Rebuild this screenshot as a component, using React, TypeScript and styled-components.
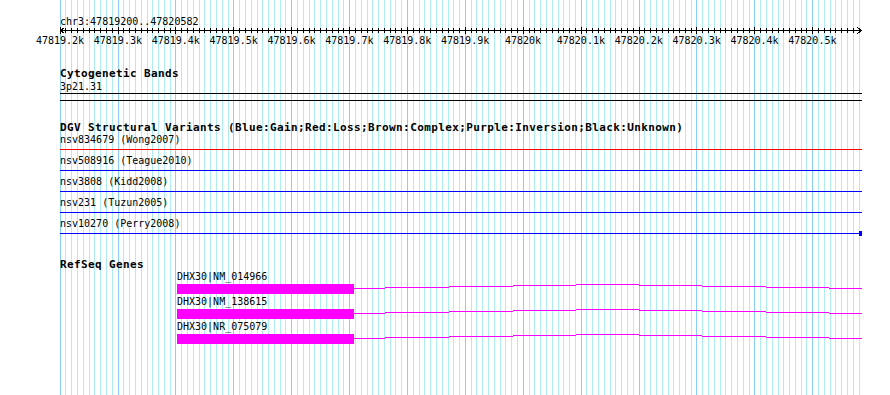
import React from "react";
import styled, { createGlobalStyle } from "styled-components";

const LEFT = 60;
const STEP10 = 5.78871; // px per 10 bp
const TRACK_W = 802;

const gridX = (i: number) => Math.round(LEFT - 0.3 + i * STEP10);
const GRID = Array.from({ length: 139 }, (_, i) => ({ x: gridX(i), major: i % 10 === 0 }));

const RULER_LABELS = [
  "47819.2k", "47819.3k", "47819.4k", "47819.5k", "47819.6k", "47819.7k", "47819.8k",
  "47819.9k", "47820k", "47820.1k", "47820.2k", "47820.3k", "47820.4k", "47820.5k",
];

const VARIANTS = [
  { name: "nsv834679 (Wong2007)", color: "#ff0000", endBox: false },
  { name: "nsv508916 (Teague2010)", color: "#0000ff", endBox: false },
  { name: "nsv3808 (Kidd2008)", color: "#0000ff", endBox: false },
  { name: "nsv231 (Tuzun2005)", color: "#0000ff", endBox: false },
  { name: "nsv10270 (Perry2008)", color: "#0000ff", endBox: true },
];

const GENES = ["DHX30|NM_014966", "DHX30|NM_138615", "DHX30|NR_075079"];

// intron "hat" connector, absolute x ranges with level above baseline
const HAT: [number, number, number][] = [
  [354, 385, 4], [385, 449, 3], [449, 513, 2], [513, 576, 1], [576, 639, 0],
  [639, 702, 1], [702, 766, 2], [766, 829, 3], [829, 862, 4],
];

const GlobalStyle = createGlobalStyle`
  html, body { margin: 0; padding: 0; background: #ffffff; }
`;

const Canvas = styled.div`
  position: relative;
  width: 890px;
  height: 395px;
  overflow: hidden;
  background: #ffffff;
`;

const GridLayer = styled.svg`
  position: absolute;
  top: 0;
  left: 0;
  display: block;
`;

const Panel = styled.div`
  position: relative;
  width: ${TRACK_W}px;
  margin-left: ${LEFT}px;
  padding-top: 15px;
  display: flex;
  flex-direction: column;
  font-family: "DejaVu Sans Mono", "Liberation Mono", monospace;
  font-size: 10px;
  line-height: 13px;
  color: #000000;
`;

const RegionTitle = styled.div`
  height: 11px;
  white-space: nowrap;
`;

const Glyph = styled.svg<{ $h: number }>`
  display: block;
  width: ${TRACK_W}px;
  height: ${(p) => p.$h}px;
  overflow: visible;
  shape-rendering: crispEdges;
`;

const TickLabels = styled.div`
  display: flex;
  height: 13px;
  margin-left: -${STEP10 * 5}px;
  white-space: nowrap;
`;

const TickLabel = styled.div`
  flex: 0 0 ${STEP10 * 10}px;
  text-align: center;
`;

const Track = styled.section`
  display: flex;
  flex-direction: column;
  margin-top: 20px;
`;

const TrackTitle = styled.div<{ $h?: number }>`
  height: ${(p) => p.$h ?? 13}px;
  font-size: 11px;
  font-weight: bold;
  letter-spacing: 0.38px;
  line-height: 13px;
  white-space: nowrap;
`;

const FeatureLabel = styled.div<{ $indent?: number; $lift?: number }>`
  position: relative;
  z-index: 1;
  height: 13px;
  line-height: ${(p) => 13 - 2 * (p.$lift ?? 0)}px;
  padding-left: ${(p) => p.$indent ?? 0}px;
  white-space: nowrap;
`;

const Band = styled.div`
  height: 6px;
  border-top: 1px solid #000000;
  border-bottom: 1px solid #000000;
`;

const Ruler: React.FC = () => (
  <Glyph $h={8} viewBox={`0 0 ${TRACK_W} 8`}>
    <rect x={0} y={4} width={801} height={1} fill="#000" />
    {GRID.map((g) => (
      <rect
        key={g.x}
        x={g.x - LEFT}
        y={g.major ? 1 : 2}
        width={1}
        height={g.major ? 7 : 5}
        fill="#000"
      />
    ))}
    <polyline points="4.5,1.5 0.5,4.5 4.5,7.5" fill="none" stroke="#000" strokeWidth={1} />
    <polyline points="797.5,1.5 801.5,4.5 797.5,7.5" fill="none" stroke="#000" strokeWidth={1} />
  </Glyph>
);

const VariantGlyph: React.FC<{ color: string; endBox: boolean }> = ({ color, endBox }) => (
  <Glyph $h={8} viewBox={`0 0 ${TRACK_W} 8`}>
    <rect x={0} y={3} width={TRACK_W} height={1} fill={color} />
    {endBox && <rect x={799} y={1} width={3} height={5} fill={color} />}
  </Glyph>
);

const GeneGlyph: React.FC = () => (
  <Glyph $h={12} viewBox={`0 0 ${TRACK_W} 12`}>
    <rect x={177 - LEFT} y={0} width={177} height={10} fill="#ff00ff" />
    {HAT.map(([a, b, lvl]) => (
      <rect key={a} x={a - LEFT} y={lvl} width={b - a} height={1} fill="#ff00ff" />
    ))}
  </Glyph>
);

export default function App() {
  return (
    <>
      <GlobalStyle />
      <Canvas>
        <GridLayer width={890} height={395} viewBox="0 0 890 395" shapeRendering="crispEdges">
          {GRID.map((g) => (
            <rect
              key={g.x}
              x={g.x}
              y={0}
              width={1}
              height={395}
              fill={g.major ? "#87cefa" : "#afeeee"}
            />
          ))}
        </GridLayer>
        <Panel>
          <RegionTitle>chr3:47819200..47820582</RegionTitle>
          <Ruler />
          <TickLabels>
            {RULER_LABELS.map((l) => (
              <TickLabel key={l}>{l}</TickLabel>
            ))}
          </TickLabels>

          <Track>
            <TrackTitle>Cytogenetic Bands</TrackTitle>
            <FeatureLabel>3p21.31</FeatureLabel>
            <Band />
          </Track>

          <Track>
            <TrackTitle $h={12}>
              DGV Structural Variants (Blue:Gain;Red:Loss;Brown:Complex;Purple:Inversion;Black:Unknown)
            </TrackTitle>
            {VARIANTS.map((v) => (
              <React.Fragment key={v.name}>
                <FeatureLabel>{v.name}</FeatureLabel>
                <VariantGlyph color={v.color} endBox={v.endBox} />
              </React.Fragment>
            ))}
          </Track>

          <Track>
            <TrackTitle>RefSeq Genes</TrackTitle>
            {GENES.map((g) => (
              <React.Fragment key={g}>
                <FeatureLabel $indent={177 - LEFT} $lift={1}>{g}</FeatureLabel>
                <GeneGlyph />
              </React.Fragment>
            ))}
          </Track>
        </Panel>
      </Canvas>
    </>
  );
}
